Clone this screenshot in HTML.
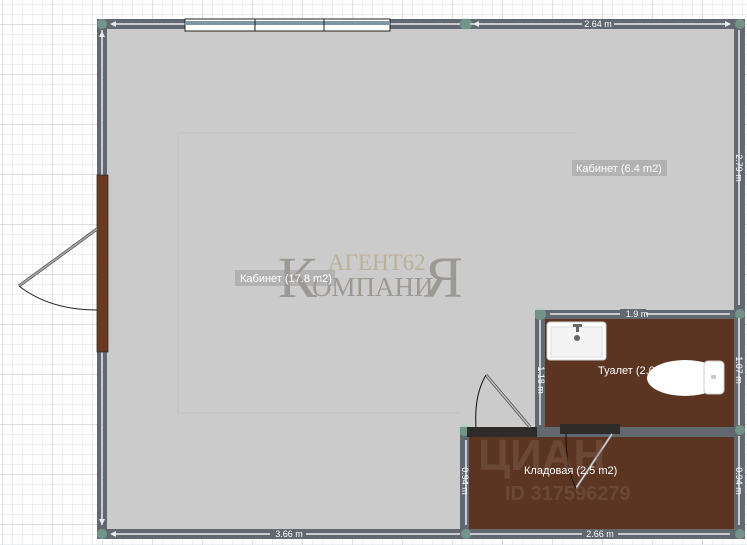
<!DOCTYPE html>
<html><head><meta charset="utf-8"><style>
html,body{margin:0;padding:0;width:747px;height:545px;overflow:hidden;background:#fff}
svg{display:block}
text{font-family:"Liberation Sans","DejaVu Sans",sans-serif}
text.serif{font-family:"Liberation Serif","DejaVu Serif",serif}
</style></head><body>
<svg width="747" height="545" viewBox="0 0 747 545">
<defs>
<pattern id="gs" x="2" y="4" width="10" height="10" patternUnits="userSpaceOnUse">
<path d="M0 0V10M0 0H10" stroke="#e3e5ea" stroke-width="1.2" fill="none"/>
</pattern>
<pattern id="gb" x="2" y="24" width="50" height="50" patternUnits="userSpaceOnUse">
<path d="M0 0V50M0 0H50" stroke="#d3d5db" stroke-width="1.4" fill="none"/>
</pattern>
</defs>
<rect width="747" height="545" fill="url(#gs)"/>
<rect width="747" height="545" fill="url(#gb)"/>
<rect x="97" y="19" width="648" height="520" fill="#626870"/>
<rect x="107" y="29" width="627" height="500" fill="#cbcbcb"/>
<path d="M178 133H575M178 133V413M178 413H460" stroke="#c0c0c0" stroke-width="1" fill="none"/>
<rect x="535" y="310" width="210" height="229" fill="#626870"/>
<rect x="460" y="427" width="285" height="112" fill="#626870"/>
<rect x="545" y="319" width="189" height="108" fill="#5b3522"/>
<rect x="469" y="437" width="265" height="92" fill="#5b3522"/>
<g stroke="#e9ecef" stroke-width="1.5">
<path d="M113 24H460M470 24H730M102 30V525M739 30V305M112 534H460M470 534H730M739 318V425M739 436V525M466 440V525M540 320V425M550 314H730"/>
</g>
<g fill="#e9ecef">
<path d="M110 24l6-3v6zM102 31l-3 6h6zM102 525l-3-6h6zM110 534l6-3v6zM473 24l6-3v6zM731 24l-6-3v6z"/>
</g>
<g font-size="9" fill="#fff" text-anchor="middle">
<rect x="582" y="19" width="32" height="10" fill="#626870"/><text x="598" y="27">2.64 m</text>
<rect x="270" y="529" width="36" height="10" fill="#626870"/><text x="289" y="537">3.66 m</text>
<rect x="582" y="529" width="36" height="10" fill="#626870"/><text x="600" y="537">2.66 m</text>
<rect x="620" y="309" width="26" height="10" fill="#626870"/><text x="637" y="317">1.9 m</text>
<text transform="translate(736,168) rotate(90)">2.79 m</text>
<text transform="translate(736,370) rotate(90)">1.07 m</text>
<text transform="translate(736,481) rotate(90)">0.94 m</text>
<text transform="translate(538,380) rotate(90)">1.18 m</text>
<text transform="translate(462,481) rotate(90)">0.94 m</text>
</g>
<g fill="#8fd8b0" opacity="0.4">
<circle cx="102" cy="24" r="5"/><circle cx="466" cy="24" r="6"/><circle cx="740" cy="24" r="5"/>
<circle cx="102" cy="534" r="5"/><circle cx="466" cy="534" r="5"/><circle cx="740" cy="534" r="5"/>
<circle cx="540" cy="314" r="6"/><circle cx="740" cy="314" r="5"/><circle cx="464" cy="430" r="6"/><circle cx="740" cy="430" r="5"/>
</g>
<rect x="185" y="19" width="205" height="12" fill="#fff" stroke="#222" stroke-width="1"/>
<rect x="186" y="21" width="203" height="4" fill="#7f97a4"/>
<path d="M255 19V31M324 19V31" stroke="#222"/>
<rect x="97" y="175" width="11" height="177" fill="#6a3a20" stroke="#333" stroke-width="0.8"/>
<path d="M97 229L19 286" stroke="#555" stroke-width="3"/><path d="M97 229L19 286" stroke="#aaa" stroke-width="1.5"/>
<path d="M19 286Q50 310 97 310" stroke="#222" fill="none"/>
<rect x="467" y="427" width="70" height="10" fill="#2e2b2b"/>
<path d="M486 375L530 427" stroke="#555" stroke-width="3"/><path d="M486 375L530 427" stroke="#bbb" stroke-width="1.5"/>
<path d="M486 375Q474 395 476 427" stroke="#111" fill="none"/>
<rect x="560" y="424" width="60" height="10" fill="#2e2b2b"/>
<path d="M612 434L576 488" stroke="#777" stroke-width="2.5"/><path d="M612 434L576 488" stroke="#ddd" stroke-width="1.2"/>
<path d="M566 434Q566 470 576 488" stroke="#111" fill="none"/>
<rect x="547" y="322" width="59" height="38" rx="3" fill="#fff" stroke="#ccc"/>
<rect x="551" y="327" width="51" height="30" fill="#f4f4f4" stroke="#ddd"/>
<rect x="573" y="324" width="9" height="3" fill="#666"/><rect x="576" y="326" width="3" height="6" fill="#666"/>
<circle cx="577" cy="338" r="3" fill="#666"/>
<ellipse cx="685" cy="378" rx="38" ry="18" fill="#fff"/>
<rect x="704" y="361" width="20" height="33" rx="4" fill="#fff" stroke="#ccc"/>
<rect x="711" y="375" width="5" height="4" fill="#ccc"/>
<g fill="#8f8880" opacity="0.75">
<text class="serif" x="278" y="297" font-size="58">К</text>
<text class="serif" x="424" y="297" font-size="58">Я</text>
<text class="serif" x="312" y="296" font-size="27">ОМПАНИ</text>
<text class="serif" x="328" y="270" font-size="23" fill="#b8a888">АГЕНТ62</text>
</g>
<g fill="#8a6a5a" opacity="0.35" font-weight="bold">
<text x="478" y="470" font-size="44">ЦИАН</text>
<text x="505" y="500" font-size="20">ID 317596279</text>
</g>
<g font-size="11" fill="#fff">
<rect x="235" y="270" width="100" height="16" fill="#9a9a9a" opacity="0.5"/><text x="240" y="282">Кабинет (17.8 m2)</text>
<rect x="572" y="160" width="95" height="16" fill="#9a9a9a" opacity="0.5"/><text x="576" y="172">Кабинет (6.4 m2)</text>
<text x="598" y="374">Туалет (2.0</text>
<text x="524" y="474">Кладовая (2.5 m2)</text>
</g>
</svg>
</body></html>
